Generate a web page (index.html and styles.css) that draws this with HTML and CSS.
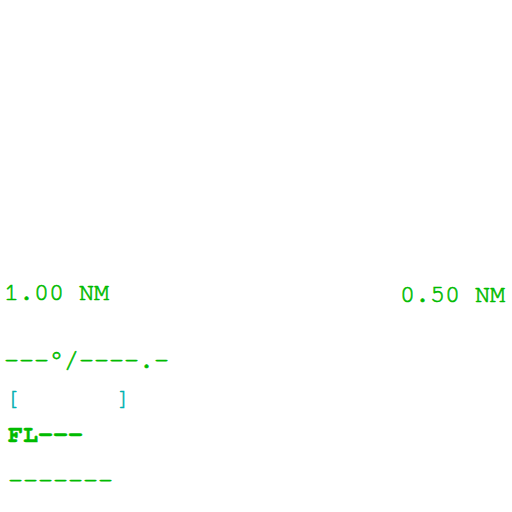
FILE: index.html
```html
<!DOCTYPE html>
<html>
<head>
<meta charset="utf-8">
<link rel="stylesheet" href="styles.css">
</head>
<body>
<div class="screen">
  <div class="row range">
    <span class="txt">1.00 NM</span>
    <span class="txt right">0.50 NM</span>
  </div>
  <div class="txt wind">---°/----.-</div>
  <div class="txt bracket">[       ]</div>
  <div class="txt fl">FL---</div>
  <div class="txt dash">-------</div>
</div>
</body>
</html>
```

FILE: styles.css
```css
html, body {
  margin: 0;
  padding: 0;
  background: #ffffff;
}
.screen {
  width: 512px;
  height: 512px;
  display: flex;
  flex-direction: column;
  padding-top: 278px;
  box-sizing: border-box;
  font-family: "FreeMono", "Liberation Mono", monospace;
  color: #00bb00;
}
.txt {
  font-size: 25px;
  line-height: 30px;
  white-space: pre;
  -webkit-text-stroke: 0.6px #00bb00;
}
.row {
  display: flex;
  justify-content: space-between;
  padding: 0 7px 0 4px;
}
.right {
  position: relative;
  top: 2px;
}
.wind {
  margin-top: 38px;
  padding-left: 4px;
}
.bracket {
  margin-top: 8px;
  padding-left: 6px;
  color: #00b0b0;
  -webkit-text-stroke: 0.6px #00b0b0;
  font-size: 23px;
}
.fl {
  margin-top: 6px;
  padding-left: 8px;
  font-weight: bold;
  font-size: 25px;
  -webkit-text-stroke: 0.4px #00bb00;
}
.dash {
  margin-top: 16px;
  padding-left: 8px;
}
```
